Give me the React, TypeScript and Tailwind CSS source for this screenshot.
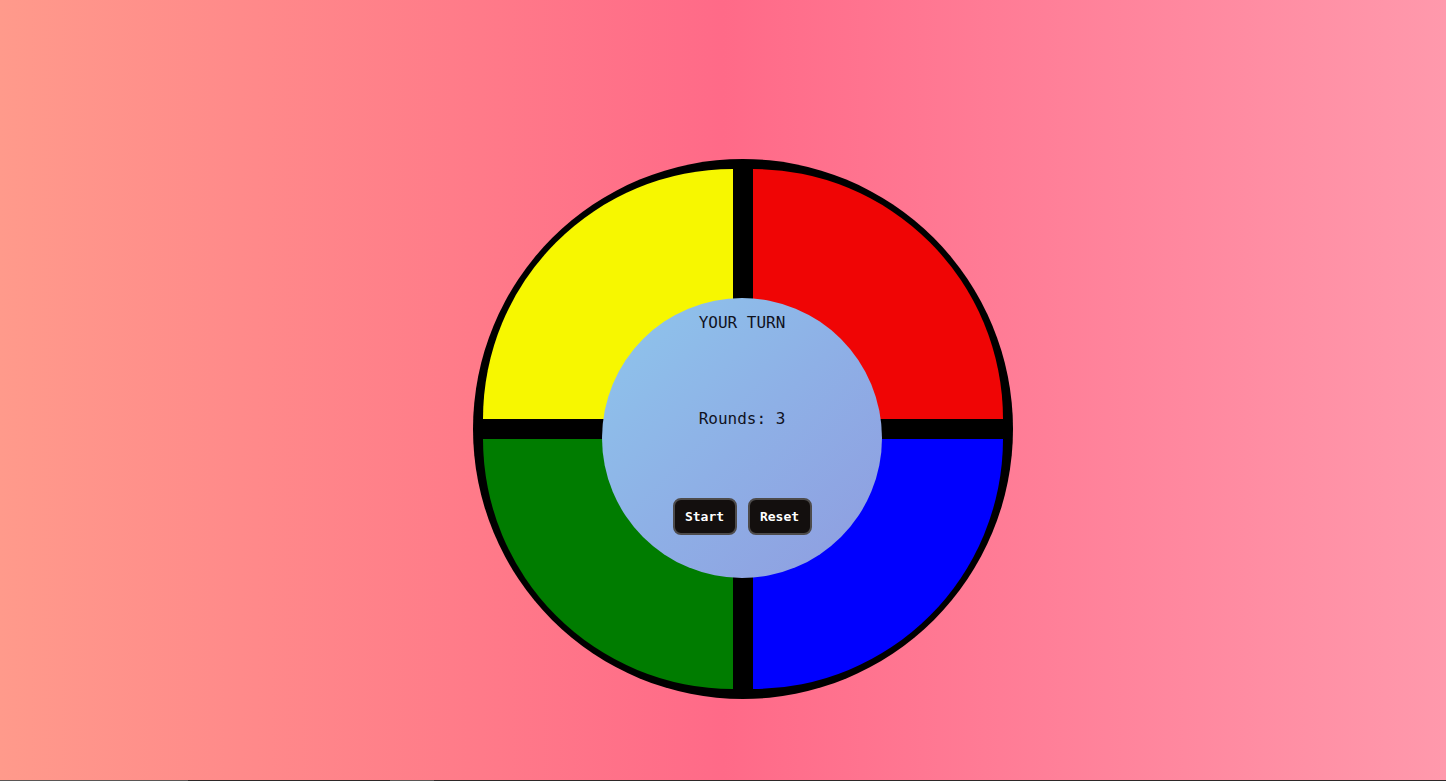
import React from "react";

export default function App() {
  const mono = { fontFamily: '"DejaVu Sans Mono", "Liberation Mono", monospace' };
  return (
    <div className="w-[1446px] h-[781px] overflow-hidden flex flex-col">
      <div className="h-[780px] w-full bg-[linear-gradient(90deg,#ff9a8b_0%,#ff6a88_50%,#ff99ac_100%)] pt-[159px] pl-[473px]">
        <div className="relative w-[540px] h-[540px] rounded-full bg-black p-[10px]">
          <div className="grid grid-cols-2 grid-rows-2 gap-[20px] w-[520px] h-[520px]">
            <div className="bg-[#f7f700] rounded-tl-full" />
            <div className="bg-[#f00505] rounded-tr-full" />
            <div className="bg-[#007c00] rounded-bl-full" />
            <div className="bg-[#0000ff] rounded-br-full" />
          </div>
          <div
            className="absolute left-[129px] top-[139px] w-[280px] h-[280px] rounded-full bg-[linear-gradient(135deg,#8ec6ec_0%,#8eb0e6_50%,#8f9ce0_100%)] flex flex-col items-center pt-[15px] text-[#10121e]"
            style={mono}
          >
            <div className="text-[16px] leading-[20px] whitespace-pre">YOUR TURN</div>
            <div className="text-[16px] leading-[20px] mt-[76px] whitespace-pre">Rounds: 3</div>
            <div className="flex gap-[11px] mt-[69px]">
              <button className="w-[64px] h-[37px] rounded-lg bg-[#130f0e] border-2 border-[#4d4b4b] text-white text-[13px] font-bold" style={mono}>
                Start
              </button>
              <button className="w-[64px] h-[37px] rounded-lg bg-[#130f0e] border-2 border-[#4d4b4b] text-white text-[13px] font-bold" style={mono}>
                Reset
              </button>
            </div>
          </div>
        </div>
      </div>
      <div className="h-[1px] w-full bg-[linear-gradient(90deg,#5a5655_0%,#5a5655_13%,#2e2828_13%,#2e2828_27%,#5a5655_27%,#5a5655_30%,#2e2828_30%,#2e2828_100%)]" />
    </div>
  );
}
